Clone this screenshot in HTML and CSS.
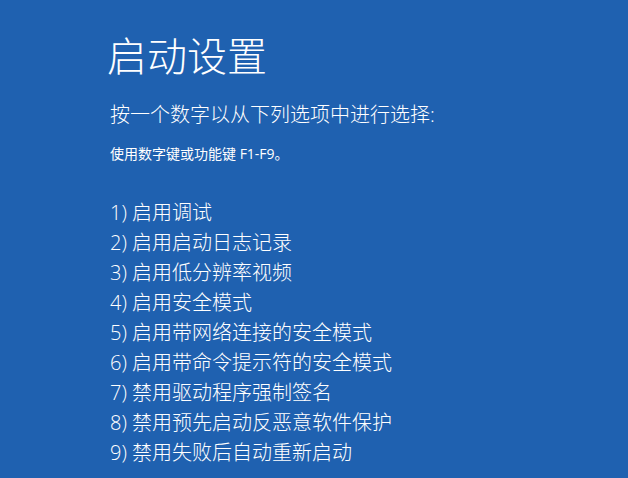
FILE: index.html
```html
<!DOCTYPE html>
<html lang="zh-CN">
<head>
<meta charset="utf-8">
<title>启动设置</title>
<link rel="stylesheet" href="styles.css">
</head>
<body>
<main class="screen">
  <h1 class="title">启动设置</h1>
  <p class="prompt">按一个数字以从下列选项中进行选择:</p>
  <p class="hint">使用数字键或功能键 F1-F9。</p>
  <ol class="options">
    <li>1) 启用调试</li>
    <li>2) 启用启动日志记录</li>
    <li>3) 启用低分辨率视频</li>
    <li>4) 启用安全模式</li>
    <li>5) 启用带网络连接的安全模式</li>
    <li>6) 启用带命令提示符的安全模式</li>
    <li>7) 禁用驱动程序强制签名</li>
    <li>8) 禁用预先启动反恶意软件保护</li>
    <li>9) 禁用失败后自动重新启动</li>
  </ol>
</main>
</body>
</html>
```
FILE: styles.css
```css
html, body {
  margin: 0;
  padding: 0;
  background: #1f61b0;
}
body {
  width: 628px;
  height: 478px;
  overflow: hidden;
  color: #ffffff;
  font-family: "Open Sans", "Noto Sans CJK SC", sans-serif;
}
.screen {
  padding: 29px 0 0 110px;
}
.title {
  margin: 0 0 0 -3px;
  font-size: 40px;
  line-height: 50px;
  font-weight: 300;
  font-family: "Noto Sans CJK SC", sans-serif;
}
.prompt {
  margin: 21px 0 0;
  font-size: 20px;
  line-height: 30px;
  font-weight: 300;
}
.hint {
  margin: 14px 0 0;
  font-size: 14px;
  line-height: 20px;
  font-weight: 400;
}
.options {
  list-style: none;
  margin: 34px 0 0;
  padding: 0;
  font-size: 20px;
  line-height: 30px;
  font-weight: 300;
}
```
